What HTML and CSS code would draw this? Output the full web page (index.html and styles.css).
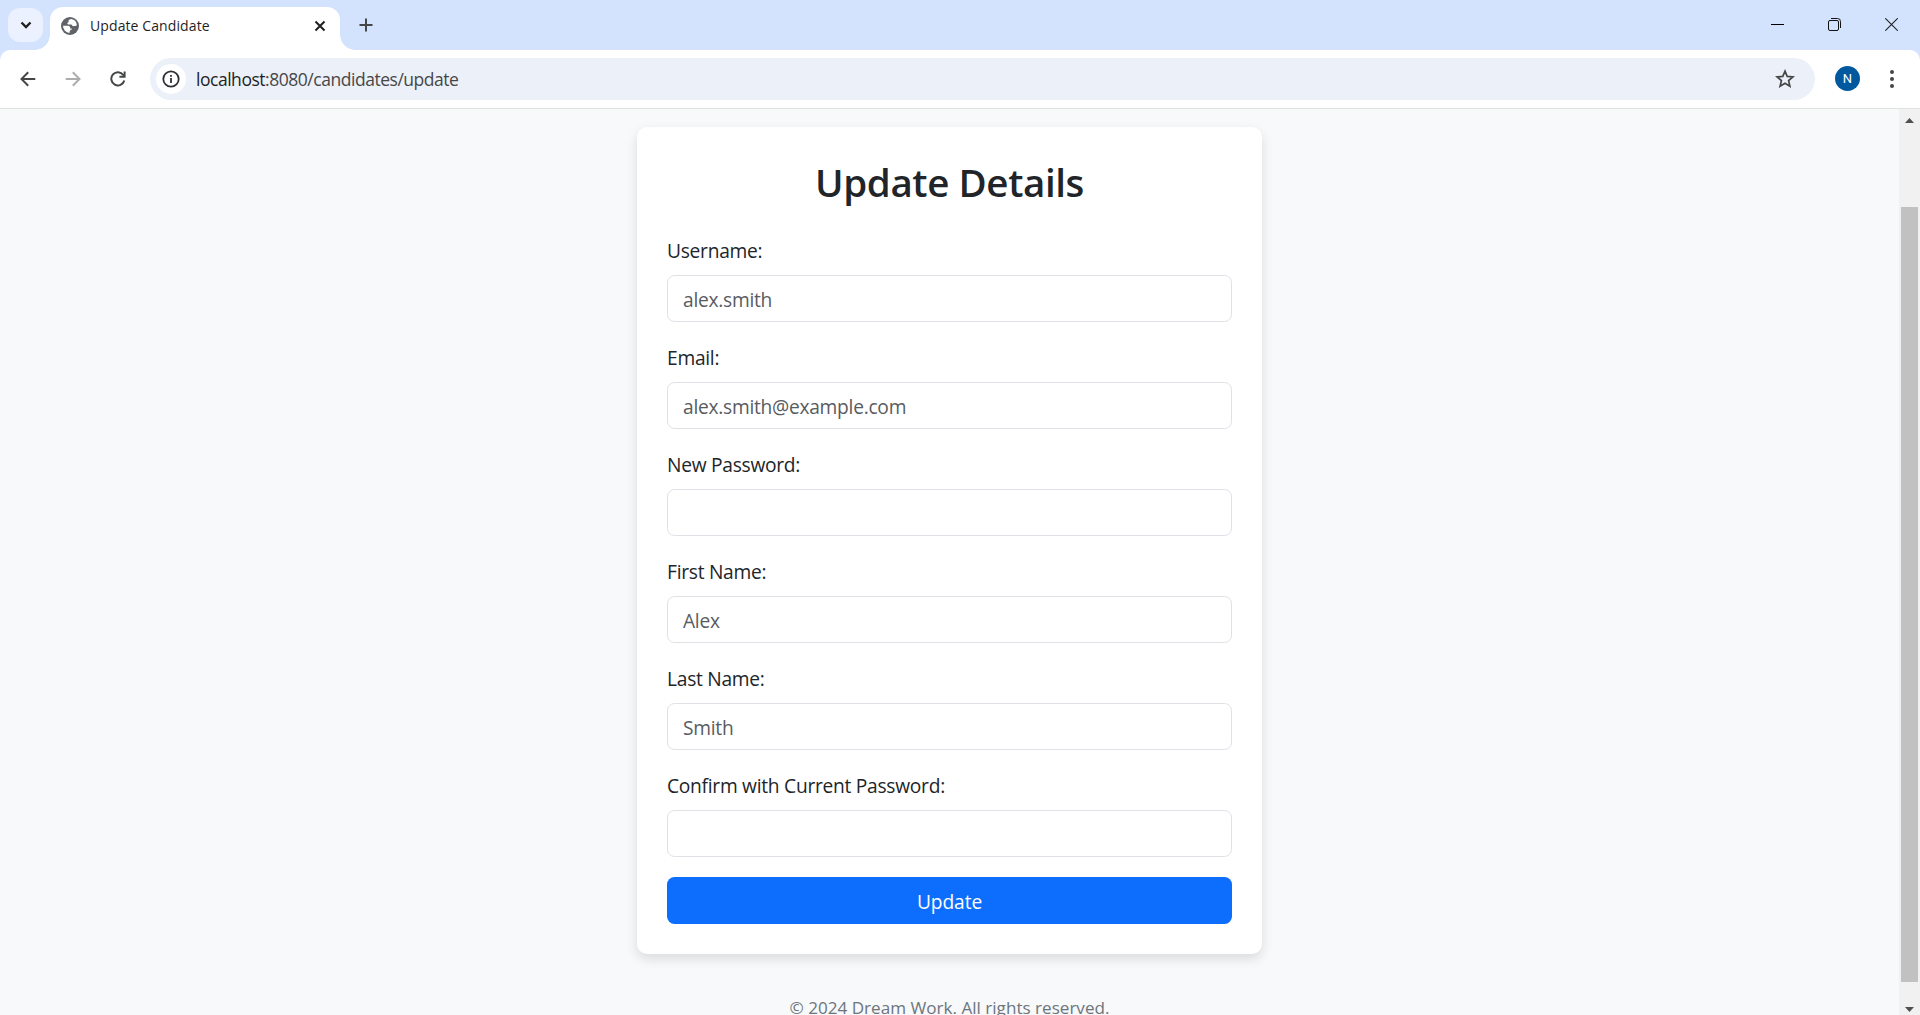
FILE: index.html
```html
<!DOCTYPE html>
<html lang="en">
<head>
<meta charset="utf-8">
<title>Update Candidate</title>
<link rel="stylesheet" href="styles.css">
</head>
<body>
<div class="window">
  <header class="tabstrip">
    <button class="tab-search" aria-label="Search tabs">
      <svg width="12" height="8" viewBox="0 0 12 8"><path d="M1.5 1.5 6 6l4.500-4.500" fill="none" stroke="#1f1f1f" stroke-width="2.300"/></svg>
    </button>
    <div class="tab">
      <svg class="favicon" width="18" height="18" viewBox="0 0 18 18"><circle cx="9" cy="9" r="9" fill="#5f6368"/><path d="M10.200 2.100C7.500 2.400 7.100 4 7.800 4.900 6 5.200 5.800 7 7.400 7.500l2.900.1c.9.200.6 1.500 1.800 1.600 1.300 0 2.300-.5 3.800-.7A7 7 0 0 0 10.200 2.100Z" fill="#fff"/><path d="M2 8.800h4.800c1.800.1 2.500 1.100 2.300 2.600h1.700v1.200c-1.600.2-2.200 1.100-2.200 3.300A7 7 0 0 1 2 8.800Z" fill="#fff"/></svg>
      <span class="tab-title">Update Candidate</span>
      <svg class="tab-close" width="12" height="12" viewBox="0 0 12 12"><path d="m1.500 1.500 9 9m0-9-9 9" stroke="#1f1f1f" stroke-width="2"/></svg>
    </div>
    <svg class="new-tab" width="14" height="14" viewBox="0 0 14 14"><path d="M7 .5v13M.5 7h13" stroke="#444746" stroke-width="2"/></svg>
    <div class="controls">
      <svg width="13" height="13" viewBox="0 0 13 13"><path d="M0 6.500h13" stroke="#000"/></svg>
      <svg width="13" height="13" viewBox="0 0 13 13" fill="none"><path d="M3 .5h6.500a3 3 0 0 1 3 3V10" stroke="#111"/><rect x=".5" y="2.500" width="10" height="10" rx="1.500" stroke="#111"/></svg>
      <svg width="13" height="13" viewBox="0 0 13 13"><path d="m.3.300 12.400 12.400m0-12.400L.3 12.700" stroke="#222" stroke-width="1.100"/></svg>
    </div>
  </header>
  <div class="toolbar">
    <div class="nav">
      <svg width="16" height="16" viewBox="0 0 16 16" fill="none" stroke="#444746" stroke-width="2"><path d="M15.300 8H2M8.200 1.200 1.500 8l6.700 6.800"/></svg>
      <svg width="16" height="16" viewBox="0 0 16 16" fill="none" stroke="#acadad" stroke-width="2"><path d="M.7 8H14M7.800 1.200 14.500 8l-6.700 6.800"/></svg>
      <svg width="16" height="16" viewBox="0 0 16 16"><path d="M14.300 9.500A6.600 6.600 0 1 1 13.300 4L14 5.300" fill="none" stroke="#444746" stroke-width="2"/><path d="M15.600.5v6.200H9.400v-2h4.200V.5Z" fill="#444746"/></svg>
    </div>
    <div class="omnibox">
      <span class="site-info"><svg width="18" height="18" viewBox="0 0 18 18"><circle cx="9" cy="9" r="7.700" fill="none" stroke="#303134" stroke-width="1.800"/><path d="M8.100 8h1.800v5H8.100ZM8.100 5h1.800v1.700H8.100Z" fill="#303134"/></svg></span>
      <span class="url"><span class="host">localhost</span>:8080/candidates/update</span>
      <svg class="star" width="20" height="20" viewBox="0 0 20 20"><path d="m10 2.200 2.200 5.200 5.700.5-4.300 3.700 1.300 5.600-4.900-3-4.900 3 1.300-5.600L2.100 7.900l5.700-.5Z" fill="none" stroke="#444746" stroke-width="1.700"/></svg>
    </div>
    <span class="avatar">N</span>
    <svg class="menu" width="4" height="18" viewBox="0 0 4 18" fill="#444746"><circle cx="2" cy="2" r="2"/><circle cx="2" cy="9" r="2"/><circle cx="2" cy="16" r="2"/></svg>
  </div>
  <div class="viewport">
    <main class="page">
      <form class="card">
        <h1 class="title">Update Details</h1>
        <div class="field"><label for="username">Username:</label><input id="username" type="text" placeholder="alex.smith"></div>
        <div class="field"><label for="email">Email:</label><input id="email" type="text" placeholder="alex.smith@example.com"></div>
        <div class="field"><label for="password">New Password:</label><input id="password" type="password"></div>
        <div class="field"><label for="first">First Name:</label><input id="first" type="text" placeholder="Alex"></div>
        <div class="field"><label for="last">Last Name:</label><input id="last" type="text" placeholder="Smith"></div>
        <div class="field"><label for="current">Confirm with Current Password:</label><input id="current" type="password"></div>
        <button class="submit" type="button">Update</button>
      </form>
      <footer class="footer">© 2024 Dream Work. All rights reserved.</footer>
    </main>
    <div class="scrollbar">
      <svg width="9" height="5" viewBox="0 0 9 5"><path d="M0 5 4.500 0 9 5Z" fill="#505050"/></svg>
      <div class="thumb"></div>
      <svg width="9" height="5" viewBox="0 0 9 5"><path d="M0 0h9L4.500 5Z" fill="#505050"/></svg>
    </div>
  </div>
</div>
</body>
</html>
```
FILE: styles.css
```css
* { box-sizing: border-box; }
body { margin: 0; font-family: "Open Sans", "Noto Sans", sans-serif; overflow: hidden; }
svg { display: block; flex: none; }
.window { width: 1920px; height: 1015px; display: flex; flex-direction: column; overflow: hidden; background: #d3e3fd; }

.tabstrip { height: 50px; flex: none; display: flex; align-items: flex-start; padding: 7px 20px 0 8px; }
.tab-search { width: 35px; height: 34px; margin: 1px 7px 0 0; padding: 0; border: 0; border-radius: 12px; background: #ebf1fe; display: flex; align-items: center; justify-content: center; }
.tab { position: relative; width: 290px; height: 43px; padding: 0 14px 6px 11px; display: flex; align-items: center; background: #fff; border-radius: 13px 13px 0 0; }
.tab::before, .tab::after { content: ""; position: absolute; bottom: 0; width: 15px; height: 15px; }
.tab::before { left: -15px; background: radial-gradient(circle at 0 0, transparent 14.5px, #fff 15px); }
.tab::after { right: -15px; background: radial-gradient(circle at 100% 0, transparent 14.5px, #fff 15px); }
.tab-title { flex: 1; margin-left: 11px; font-size: 14px; letter-spacing: 0.1px; color: #1f1f1f; white-space: nowrap; }
.new-tab { margin: 11px 0 0 19px; }
.controls { margin: 11px 2px 0 auto; width: 127px; display: flex; justify-content: space-between; }

.toolbar { height: 59px; flex: none; display: flex; align-items: center; padding: 0 26px 1px 20px; background: #fff; border-bottom: 1px solid #dfe1dd; border-radius: 10px 10px 0 0; }
.nav { display: flex; gap: 29px; width: 130px; }
.omnibox { width: 1665px; height: 42px; display: flex; align-items: center; padding: 0 20px 0 6px; border-radius: 21px; background: #ecf0f9; }
.site-info { width: 30px; height: 30px; border-radius: 50%; background: #fff; display: flex; align-items: center; justify-content: center; }
.url { flex: 1; margin: 1px 0 0 10px; font-size: 17.5px; letter-spacing: -0.47px; color: #474747; }
.host { color: #1f1f1f; }
.avatar { width: 25px; height: 25px; margin-left: 20px; border-radius: 50%; background: #00599f; color: #fff; font: 13px/25px Roboto, sans-serif; text-align: center; }
.menu { margin-left: auto; }

.viewport { flex: 1; min-height: 0; display: flex; background: #f8f9fa; }
.page { flex: 1; padding-top: 18px; display: flex; flex-direction: column; align-items: center; overflow: hidden; color: #212529; }
.card { width: 625px; height: 827px; flex: none; padding: 30px; border-radius: 10px; background: #fff; box-shadow: 0 5px 12px rgba(0, 0, 0, .12); }
.title { height: 48px; margin: 0 0 30px; font-size: 38.5px; line-height: 50px; font-weight: 560; letter-spacing: -0.4px; text-align: center; white-space: nowrap; }
.field { margin-bottom: 20px; }
.field label { display: block; height: 30px; margin-bottom: 10px; font-size: 19.2px; line-height: 32px; letter-spacing: -0.27px; }
.field input { display: block; width: 100%; height: 47px; padding: 2px 15px 0; border: 1px solid #dee2e6; border-radius: 7.5px; background: #fff; font: 19.2px "Open Sans", sans-serif; letter-spacing: -0.27px; outline: 0; }
.field input::placeholder { color: #595c5f; opacity: 1; }
.submit { display: block; width: 100%; height: 47px; padding: 2px 0 0; border: 0; border-radius: 7.5px; background: #0d6efd; color: #fff; font: 19.2px "Open Sans", sans-serif; letter-spacing: -0.1px; }
.footer { margin-top: 39px; font-size: 17.1px; line-height: 30px; color: #6c757d; white-space: nowrap; }

.scrollbar { width: 21px; flex: none; padding: 9px 2px 3px; display: flex; flex-direction: column; align-items: center; background: #f1f1f1; }
.thumb { width: 17px; height: 775px; flex: none; margin: 84px 0 25px; background: #c1c1c1; }
```
